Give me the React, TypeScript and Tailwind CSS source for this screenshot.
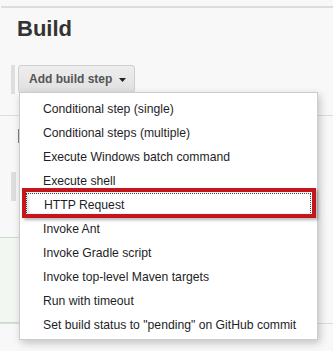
const steps = [
  "Conditional step (single)",
  "Conditional steps (multiple)",
  "Execute Windows batch command",
  "Execute shell",
  "HTTP Request",
  "Invoke Ant",
  "Invoke Gradle script",
  "Invoke top-level Maven targets",
  "Run with timeout",
  'Set build status to "pending" on GitHub commit',
];

export default function App() {
  return (
    <div className="relative w-[333px] h-[351px] overflow-hidden bg-[#f8f8f8] font-['Liberation_Sans',Arial,sans-serif]">
      {/* page behind the dropdown */}
      <div className="pt-[6px] pl-px">
        <div className="h-[2px] bg-[#dcdcdc]" />
      </div>
      <h1 className="pl-[17px] pt-[10px] text-[22px] leading-[22px] font-bold text-[#333]">Build</h1>

      <div className="flex items-stretch mt-[25px] pl-[11px] gap-[3px] h-[29px]">
        <div className="w-[4px] bg-[#dedede]" />
        <button className="flex items-center gap-[7px] w-[117px] h-[28px] pl-[10px] rounded-[3px] border border-[#cfcfcf] bg-gradient-to-b from-[#eeeeee] to-[#e0e0e0] text-[12px] font-bold text-[#555]">
          Add build step
          <svg width="7" height="4" viewBox="0 0 7 4" className="mt-px">
            <path d="M0 0h7L3.5 4z" fill="#222" />
          </svg>
        </button>
      </div>

      <div className="mt-[21px] h-px bg-[#dcdcdc]" />
      <div className="ml-[18px] mt-[13px] w-[2px] h-[14px] bg-[#8a8070]" />
      <div className="ml-[11px] mt-[29px] w-[5px] h-[29px] bg-[#dedede]" />
      <div className="mt-[36px] w-[150px] h-[86px] border-y border-[#c4dfcf] bg-[#f3f7f1]" />
      <div className="h-px bg-[#dcdcdc]" />

      {/* dropdown menu */}
      <div className="absolute left-[19px] top-[92px] w-[299px] h-[248px] py-[4px] bg-white border border-[#cccccc] shadow-[2px_3px_8px_rgba(0,0,0,0.22)]">
        {steps.map((s) => (
          <div
            key={s}
            className={
              s === "HTTP Request"
                ? "flex items-center h-[24px] mx-[6px] pl-[17px] border border-dotted border-[#444] text-[12.2px] text-[#1e1e28]"
                : "flex items-center h-[24px] pl-[23px] text-[12.2px] text-[#1e1e28]"
            }
          >
            {s}
          </div>
        ))}
      </div>

      {/* highlight box around HTTP Request */}
      <div className="absolute left-[22px] top-[188px] w-[294px] h-[30px] border-4 border-[#c4161c] shadow-[2px_2px_3px_rgba(0,0,0,0.3),inset_3px_0_3px_rgba(0,0,0,0.12)]" />
    </div>
  );
}
